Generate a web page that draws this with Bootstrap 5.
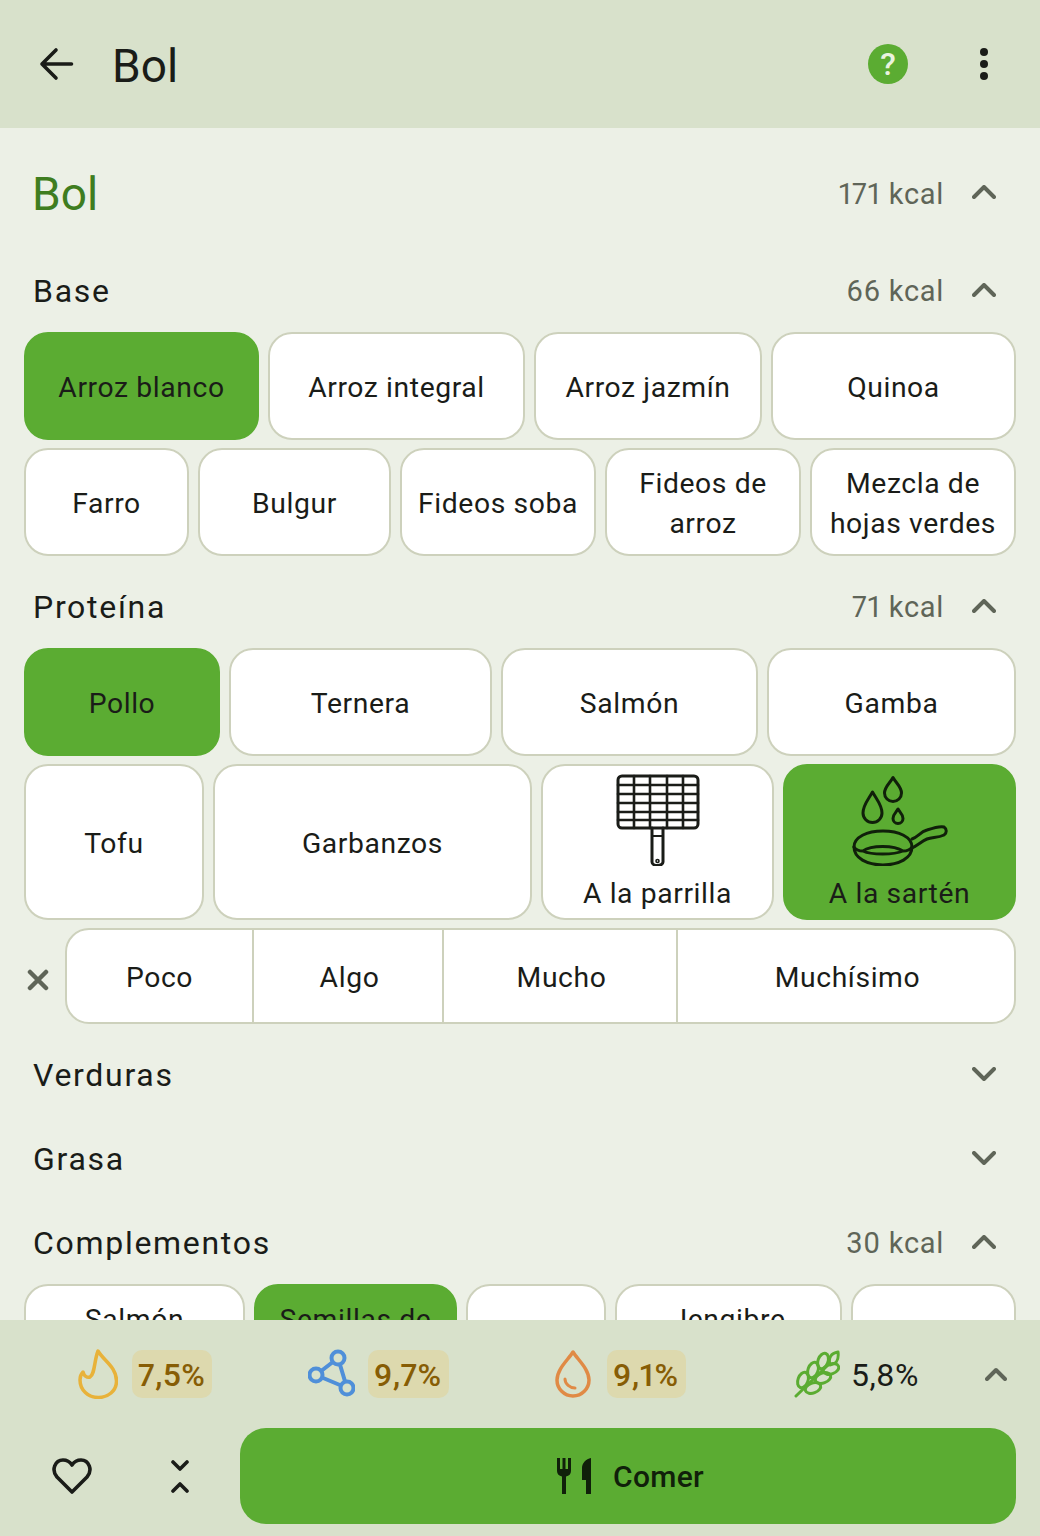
<!DOCTYPE html>
<html lang="es">
<head>
  <meta charset="UTF-8" />
  <meta name="viewport" content="width=device-width, initial-scale=1" />
  <title>Bol</title>
  <link href="https://cdn.jsdelivr.net/npm/bootstrap@5.3.0/dist/css/bootstrap.min.css" rel="stylesheet" />
  <style>
    body { background: #ecf0e6; color: #1a1c18; font-family: Roboto, "Liberation Sans", sans-serif; font-variant-numeric: proportional-nums; }
    .app-screen { width: 1040px; height: 1536px; overflow: hidden; }
    .app-bar { height: 128px; background: #d8e1cb; padding: 4px 52px 0 38px; flex: none; }
    .app-bar svg, .help-dot { margin-top: -4px; }
    .app-title { font-size: 46px; line-height: 1; margin: 0 0 0 37px; font-weight: 400; }
    .scroll-area { flex: 1 1 auto; min-height: 0; overflow: hidden; padding: 0 24px; }
    .sec-head { height: 84px; padding: 0 20px 0 9px; flex: none; }
    .sec-head h2 { font-size: 32px; line-height: 1; letter-spacing: 1.7px; font-weight: 400; margin: 0; padding-top: 2px; }
    .sec-main { height: 120px; padding-top: 10px; }
    .sec-main h1 { font-size: 46px; line-height: 1; font-weight: 400; margin: 0 0 0 -1px; color: #3f7d20; padding-top: 1px; }
    .sec-main .chev-slot { margin-top: -2px; }
    .kcal-txt { font-size: 29px; line-height: 1; color: #5f6558; letter-spacing: .7px; margin-right: 28px; padding-top: 2px; }
    .chev-slot { width: 24px; flex: none; display: flex; }
    .chip-grid { display: grid; gap: 8px 9px; margin-bottom: 8px; }
    .chip-btn { height: 108px; padding: 4px 8px 0; font-size: 28.3px; line-height: 40px; letter-spacing: .6px; color: #1a1c18; background: #fff; border: 2px solid #cdd1bc; border-radius: 24px; display: flex; flex-direction: column; align-items: center; justify-content: center; }
    .chip-btn:hover { background: #fff; color: #1a1c18; border-color: #cdd1bc; }
    .chip-on, .chip-on:hover { background: #5bac32; border-color: #5bac32; }
    .chip-tall { height: 156px; padding-top: 8px; justify-content: flex-start; }
    .chip-plain { padding-top: 4px; justify-content: center; }
    .chip-tall svg { display: block; margin-bottom: 8px; }
    .chip-cut { padding-top: 14px; justify-content: flex-start; }
    .grid-a { grid-template-columns: 235px 257px 228px 1fr; }
    .grid-b { grid-template-columns: 165px 193px 196px 196px 1fr; }
    .grid-c { grid-template-columns: 196px 263px 257px 1fr; }
    .grid-d { grid-template-columns: 180px 319px 233px 1fr; }
    .grid-e { grid-template-columns: 221px 203px 140px 227px 1fr; }
    .portion-row { height: 96px; margin-bottom: 8px; }
    .portion-x { width: 41px; flex: none; padding: 8px 0 0 3px; }
    .portion-group { flex: 1 1 auto; display: grid; grid-template-columns: 189px 190px 234px 1fr; }
    .portion-group .chip-btn { height: 96px; border-radius: 0; margin-left: -2px; padding-left: 11px; }
    .portion-group .chip-btn:first-child { border-radius: 24px 0 0 24px; margin-left: 0; padding-left: 8px; }
    .portion-group .chip-btn:last-child { border-radius: 0 24px 24px 0; }
    .bottom-bar { height: 216px; flex: none; background: #d8e1cb; position: relative; }
    .stat-row { height: 108px; display: grid; grid-template-columns: 230px 247px 239px 191px 24px; padding-left: 78px; align-items: center; }
    .stat-txt { font-size: 32px; line-height: 1; letter-spacing: .4px; padding-top: 2px; }
    .stat-warn { background: #ddd9ae; color: #875d05; font-weight: 500; border-radius: 10px; height: 48px; padding: 2px 7px 0 6px; display: flex; align-items: center; }
    .gap-fire { gap: 14px; }
    .gap-net { gap: 13px; }
    .gap-drop { gap: 16px; }
    .gap-wheat { gap: 11px; }
    .action-row { height: 96px; padding-left: 52px; }
    .fav-slot { width: 119px; flex: none; }
    .collapse-slot { width: 69px; flex: none; }
    .eat-btn { width: 776px; height: 96px; flex: none; background: #5bac32; border: 0; border-radius: 26px; color: #10200a; font-size: 30px; font-weight: 500; letter-spacing: .3px; gap: 21px; padding-left: 16px; }
    .eat-btn span { padding-top: 1px; }
    .eat-btn:hover { background: #5bac32; color: #10200a; }
    .help-dot { width: 40px; height: 40px; border-radius: 50%; background: #5bac32; color: #e9f3df; font-size: 32px; font-weight: 500; line-height: 1; margin-right: 72px; }
    .ico-line { fill: none; stroke-linecap: round; stroke-linejoin: round; }
  </style>
</head>
<body>
  <div class="app-screen d-flex flex-column">
    <header class="app-bar d-flex align-items-center">
      <svg width="37" height="36" viewBox="0 0 37 36" class="ico-line flex-none" stroke="#1a1c18" stroke-width="3.600"><path d="M33.500 18H4M18 4 4 18l14 14" /></svg>
      <div class="app-title flex-grow-1">Bol</div>
      <div class="help-dot d-flex align-items-center justify-content-center">?</div>
      <svg width="8" height="32" viewBox="0 0 8 32" fill="#1a1c18"><circle cx="4" cy="4" r="4" /><circle cx="4" cy="16" r="4" /><circle cx="4" cy="28" r="4" /></svg>
    </header>

    <main class="scroll-area">
      <div class="sec-head sec-main d-flex align-items-center">
        <h1 class="flex-grow-1">Bol</h1>
        <span class="kcal-txt">171 kcal</span>
        <span class="chev-slot"><svg width="24" height="14" viewBox="0 0 24 14" class="ico-line" stroke="#5f6558" stroke-width="4"><path d="M2 12 12 2l10 10" /></svg></span>
      </div>

      <div class="sec-head d-flex align-items-center">
        <h2 class="flex-grow-1">Base</h2>
        <span class="kcal-txt">66 kcal</span>
        <span class="chev-slot"><svg width="24" height="14" viewBox="0 0 24 14" class="ico-line" stroke="#5f6558" stroke-width="4"><path d="M2 12 12 2l10 10" /></svg></span>
      </div>
      <div class="chip-grid grid-a">
        <button class="btn chip-btn chip-on">Arroz blanco</button>
        <button class="btn chip-btn">Arroz integral</button>
        <button class="btn chip-btn">Arroz jazmín</button>
        <button class="btn chip-btn">Quinoa</button>
      </div>
      <div class="chip-grid grid-b">
        <button class="btn chip-btn">Farro</button>
        <button class="btn chip-btn">Bulgur</button>
        <button class="btn chip-btn">Fideos soba</button>
        <button class="btn chip-btn">Fideos de arroz</button>
        <button class="btn chip-btn">Mezcla de hojas verdes</button>
      </div>

      <div class="sec-head d-flex align-items-center">
        <h2 class="flex-grow-1">Proteína</h2>
        <span class="kcal-txt">71 kcal</span>
        <span class="chev-slot"><svg width="24" height="14" viewBox="0 0 24 14" class="ico-line" stroke="#5f6558" stroke-width="4"><path d="M2 12 12 2l10 10" /></svg></span>
      </div>
      <div class="chip-grid grid-c">
        <button class="btn chip-btn chip-on">Pollo</button>
        <button class="btn chip-btn">Ternera</button>
        <button class="btn chip-btn">Salmón</button>
        <button class="btn chip-btn">Gamba</button>
      </div>
      <div class="chip-grid grid-d">
        <button class="btn chip-btn chip-tall chip-plain">Tofu</button>
        <button class="btn chip-btn chip-tall chip-plain">Garbanzos</button>
        <button class="btn chip-btn chip-tall">
          <svg width="84" height="92" viewBox="0 0 84 92" class="ico-line" stroke="#1a1c18" stroke-width="3">
            <rect x="2" y="2" width="80" height="52" rx="4" />
            <path d="M18 2v52M34 2v52M51 2v52M67 2v52M2 11h80M2 20h80M2 29h80M2 38h80M2 46h80" stroke-width="2.600" />
            <path d="M36 54v34a5.500 3.500 0 0 0 11 0V54" />
            <path d="M37 62h9" stroke-width="2" />
            <circle cx="41.500" cy="87" r=".8" />
          </svg>
          <span>A la parrilla</span>
        </button>
        <button class="btn chip-btn chip-tall chip-on">
          <svg width="96" height="92" viewBox="0 0 96 92" class="ico-line" stroke="#10200a" stroke-width="3">
            <path d="M20.500 18C16 26 11 31 11 39a9.500 9.500 0 0 0 19 0C30 31 25 26 20.500 18z" />
            <path d="M41 3.500C38 9 32.500 13 32.500 19a8.500 8.500 0 0 0 17 0C49.500 13 44 9 41 3.500z" />
            <path d="M46 35C44.500 38 41 40 41 44.500a5 5 0 0 0 10 0C51 40 47.500 38 46 35z" />
            <path d="M2 73C2 63 15 57 31 57s29 6 29 16c0 11-13 18-29 18S2 84 2 73z" />
            <path d="M11 77c8-6 31-6 40 0-9 4-32 4-40 0zM2 73c2 3 5 4 9 4M60 73c-2 3-5 4-9 4" />
            <path d="M60 65c6-2 8-7 15-9 6-2 14-4 17-3 3 2 3 6 0 8-6 3-12 2-17 4-5 2-9 6-15 9" />
          </svg>
          <span>A la sartén</span>
        </button>
      </div>
      <div class="portion-row d-flex align-items-center">
        <span class="portion-x d-flex"><svg width="22" height="22" viewBox="0 0 22 22" class="ico-line" stroke="#5f6558" stroke-width="4.500"><path d="M3 3l16 16M19 3 3 19" /></svg></span>
        <div class="portion-group">
          <button class="btn chip-btn">Poco</button>
          <button class="btn chip-btn">Algo</button>
          <button class="btn chip-btn">Mucho</button>
          <button class="btn chip-btn">Muchísimo</button>
        </div>
      </div>

      <div class="sec-head d-flex align-items-center">
        <h2 class="flex-grow-1">Verduras</h2>
        <span class="chev-slot"><svg width="24" height="14" viewBox="0 0 24 14" class="ico-line" stroke="#5f6558" stroke-width="4"><path d="M2 2l10 10L22 2" /></svg></span>
      </div>
      <div class="sec-head d-flex align-items-center">
        <h2 class="flex-grow-1">Grasa</h2>
        <span class="chev-slot"><svg width="24" height="14" viewBox="0 0 24 14" class="ico-line" stroke="#5f6558" stroke-width="4"><path d="M2 2l10 10L22 2" /></svg></span>
      </div>
      <div class="sec-head d-flex align-items-center">
        <h2 class="flex-grow-1">Complementos</h2>
        <span class="kcal-txt">30 kcal</span>
        <span class="chev-slot"><svg width="24" height="14" viewBox="0 0 24 14" class="ico-line" stroke="#5f6558" stroke-width="4"><path d="M2 12 12 2l10 10" /></svg></span>
      </div>
      <div class="chip-grid grid-e">
        <button class="btn chip-btn chip-cut">Salmón</button>
        <button class="btn chip-btn chip-cut chip-on">Semillas de</button>
        <button class="btn chip-btn chip-cut"></button>
        <button class="btn chip-btn chip-cut">Jengibre</button>
        <button class="btn chip-btn chip-cut"></button>
      </div>
    </main>

    <footer class="bottom-bar">
      <div class="stat-row">
        <div class="d-flex align-items-center gap-fire">
          <svg width="40" height="50" viewBox="0 0 40 50" class="ico-line" stroke="#e8b23a" stroke-width="3.500"><path d="M20 2c6 10 18.500 16 18.500 30 0 10-8.500 16.500-18 16.500C10 48.500 2 41 2 31c0-3 1-6 3-8 1 4 4 6 7 5 5-3 4-16 8-26z" /></svg>
          <span class="stat-txt stat-warn">7,5%</span>
        </div>
        <div class="d-flex align-items-center gap-net">
          <svg width="47" height="50" viewBox="0 0 47 50" class="ico-line" stroke="#4f8fd9" stroke-width="4"><path d="M30 9 8 26l31 13z" /><circle cx="30" cy="9" r="6.500" fill="#d8e1cb" /><circle cx="8" cy="26" r="6.500" fill="#d8e1cb" /><circle cx="39" cy="39" r="6.500" fill="#d8e1cb" /></svg>
          <span class="stat-txt stat-warn">9,7%</span>
        </div>
        <div class="d-flex align-items-center gap-drop">
          <svg width="36" height="48" viewBox="0 0 36 48" class="ico-line" stroke="#e08a45" stroke-width="3.500"><path d="M18 2C13 10 2 19 2 30a16 16 0 0 0 32 0C34 19 23 10 18 2z" /><path d="M10 29c0 5 5 9 10 9" stroke-width="3" /></svg>
          <span class="stat-txt stat-warn">9,1%</span>
        </div>
        <div class="d-flex align-items-center gap-wheat">
          <svg width="46" height="48" viewBox="0 0 46 48" class="ico-line" stroke="#5bac32" stroke-width="3"><path d="M2 46 34 15" /><ellipse cx="9" cy="30" rx="8" ry="5" transform="rotate(-70 9 30)" /><ellipse cx="19" cy="20" rx="8" ry="5" transform="rotate(-70 19 20)" /><ellipse cx="29" cy="11" rx="8" ry="5" transform="rotate(-70 29 11)" /><ellipse cx="19" cy="38" rx="8" ry="5" transform="rotate(-20 19 38)" /><ellipse cx="29" cy="28" rx="8" ry="5" transform="rotate(-20 29 28)" /><ellipse cx="37" cy="19" rx="8" ry="5" transform="rotate(-20 37 19)" /><path d="M36 15c-2-7 1-12 8-13 1 8-1 12-8 13z" /></svg>
          <span class="stat-txt">5,8%</span>
        </div>
        <svg width="22" height="14" viewBox="0 0 22 14" class="ico-line" stroke="#5f6558" stroke-width="4"><path d="M2 12l9-9 9 9" /></svg>
      </div>
      <div class="action-row d-flex align-items-center">
        <span class="fav-slot d-flex"><svg width="40" height="36" viewBox="0 0 40 36" class="ico-line" stroke="#1a1c18" stroke-width="3.600"><path d="M20 34 5 19C-1 12 3 2 11 2c4 0 7 2 9 5 2-3 5-5 9-5 8 0 12 10 6 17z" /></svg></span>
        <span class="collapse-slot d-flex"><svg width="18" height="33" viewBox="0 0 18 33" class="ico-line" stroke="#1a1c18" stroke-width="3.600"><path d="M2 2l7 7 7-7M2 31l7-7 7 7" /></svg></span>
        <button class="btn eat-btn d-flex align-items-center justify-content-center">
          <svg width="36" height="36" viewBox="0 0 36 36" fill="#10200a"><path d="M1 0h3v11h2.500V0h3v11H12V0h3v13c0 3-2 5-5 5.500V36H6V18.500C3 18 1 16 1 13zM35 0v36h-5V22h-4V10c0-5 4-9 9-10z" /></svg>
          <span>Comer</span>
        </button>
      </div>
    </footer>
  </div>
  <script src="https://cdn.jsdelivr.net/npm/bootstrap@5.3.0/dist/js/bootstrap.bundle.min.js"></script>
</body>
</html>
